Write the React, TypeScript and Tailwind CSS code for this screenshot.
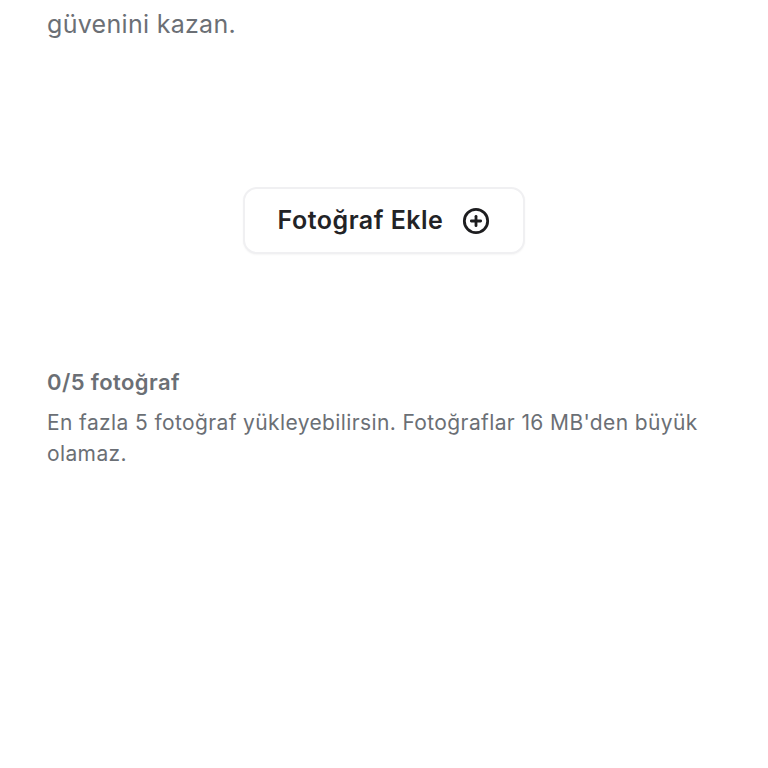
import { CirclePlus } from 'lucide-react'

export default function App() {
  return (
    <div className="w-[768px] h-[768px] bg-white overflow-hidden font-['Inter',sans-serif]">
      <div className="px-[47px] pt-[6px]">
        <p className="text-[25px] leading-[36px] tracking-[0.3px] text-[#6b6f75]">güvenini kazan.</p>

        <div className="flex justify-center mt-[145px]">
          <button className="flex items-center gap-[19px] w-[282px] h-[67px] justify-center rounded-[14px] border-2 border-[#f0f0f2] bg-white shadow-[0_1px_2px_rgba(0,0,0,0.04)]">
            <span className="text-[25px] font-semibold tracking-[0.5px] text-[#222326]">Fotoğraf Ekle</span>
            <CirclePlus className="w-[28px] h-[28px] text-[#1d1d1f]" strokeWidth={2.4} />
          </button>
        </div>

        <div className="mt-[112px]">
          <p className="text-[22px] leading-[32px] font-semibold tracking-[0.4px] text-[#6b6f75]">0/5 fotoğraf</p>
          <p className="mt-[9px] text-[21px] leading-[31px] tracking-[0.38px] text-[#6b6f75]">
            En fazla 5 fotoğraf yükleyebilirsin. Fotoğraflar 16 MB'den büyük olamaz.
          </p>
        </div>
      </div>
    </div>
  )
}
